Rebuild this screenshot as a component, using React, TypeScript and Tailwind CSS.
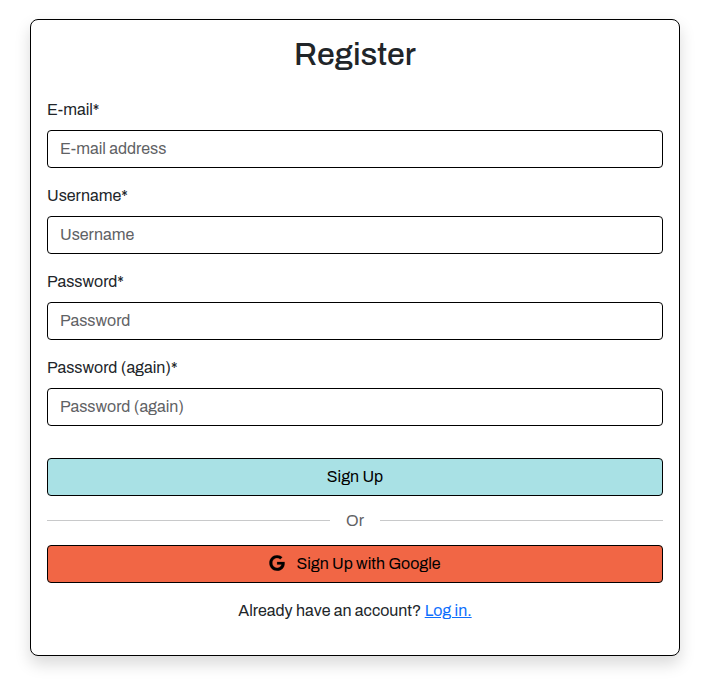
import { FaGoogle } from "react-icons/fa";

const fields = [
  { id: "email", label: "E-mail", type: "email", placeholder: "E-mail address" },
  { id: "username", label: "Username", type: "text", placeholder: "Username" },
  { id: "password1", label: "Password", type: "password", placeholder: "Password" },
  { id: "password2", label: "Password (again)", type: "password", placeholder: "Password (again)" },
];

export default function App() {
  return (
    <main className="min-h-screen bg-white py-[19px] pr-[31px] pl-[30px] font-['Archivo','Liberation_Sans',Arial,sans-serif] text-base text-[#212529]">
      <section className="rounded-lg border border-black bg-white p-4 pb-8 shadow-[0_8px_16px_rgba(0,0,0,0.15)]">
        <h1 className="mb-6 text-center text-[32px] leading-[38px] font-medium">Register</h1>
        <form onSubmit={(e) => e.preventDefault()}>
          {fields.map((f) => (
            <div key={f.id} className="mb-4">
              <label htmlFor={f.id} className="mb-2 block leading-6">
                {f.label}<span>*</span>
              </label>
              <input
                id={f.id}
                name={f.id}
                type={f.type}
                placeholder={f.placeholder}
                className="block w-full rounded border border-black bg-white px-3 py-1.5 text-base leading-6 placeholder:text-[#5f6265]"
              />
            </div>
          ))}
          <button type="submit" className="mt-8 block h-[38px] w-full rounded border border-black bg-[#a9e1e5] text-black">
            Sign Up
          </button>
        </form>
        <div className="my-3 flex items-center gap-4 leading-[25px] text-[#5f6265]">
          <hr className="flex-1 border-[#c8c9ca]" />
          <span>Or</span>
          <hr className="flex-1 border-[#c8c9ca]" />
        </div>
        <button type="button" className="flex h-[38px] w-full items-center justify-center gap-[11px] rounded border border-black bg-[#f16645] text-black">
          <FaGoogle className="mb-0.5 size-4" strokeWidth={6} stroke="currentColor" aria-hidden="true" />
          Sign Up with Google
        </button>
        <p className="mt-4 text-center leading-6">
          Already have an account?{" "}
          <a href="#login" className="text-[#0d6efd] underline">Log in.</a>
        </p>
      </section>
    </main>
  );
}
